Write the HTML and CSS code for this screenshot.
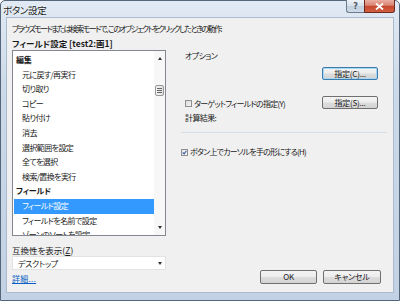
FILE: index.html
```html
<!DOCTYPE html>
<html lang="ja">
<head>
<meta charset="utf-8">
<title>ボタン設定</title>
<link rel="stylesheet" href="styles.css">
</head>
<body>
<div class="window">
  <div class="titlebar">
    <span class="title">ボタン設定</span>
    <div class="caption-btns">
      <span class="cbtn help">?</span>
      <span class="cbtn close"><svg width="9" height="7" viewBox="0 0 9 7"><path d="M1 0.5 L8 6.5 M8 0.5 L1 6.5" stroke="#fff" stroke-width="1.8"/></svg></span>
    </div>
  </div>
  <div class="client">
    <div class="intro">ブラウズモードまたは検索モードで、このオブジェクトをクリックしたときの動作:</div>
    <div class="heading">フィールド設定 [test2:画1]</div>
    <div class="main">
      <div class="left">
        <div class="listbox">
          <ul class="list">
            <li class="group">編集</li>
            <li>元に戻す/再実行</li>
            <li>切り取り</li>
            <li>コピー</li>
            <li>貼り付け</li>
            <li>消去</li>
            <li>選択範囲を設定</li>
            <li>全てを選択</li>
            <li>検索/置換を実行</li>
            <li class="group">フィールド</li>
            <li class="selected">フィールド設定</li>
            <li>フィールドを名前で設定</li>
            <li>ゾーンのソートを設定</li>
          </ul>
          <div class="scrollbar">
            <span class="arrow-up"></span>
            <span class="thumb"><i></i><i></i><i></i></span>
            <span class="arrow-down"></span>
          </div>
        </div>
        <div class="compat-label">互換性を表示(<u>Z</u>)</div>
        <div class="select"><span>デスクトップ</span><span class="arrow-down"></span></div>
        <a class="link" href="#">詳細...</a>
      </div>
      <div class="right">
        <div class="opt-label">オプション</div>
        <div class="btn-row"><span class="btn focused">指定(C)...</span></div>
        <div class="check-row">
          <span class="check-item"><span class="checkbox"></span>ターゲットフィールドの指定(Y)</span>
          <span class="btn">指定(S)...</span>
        </div>
        <div class="calc">計算結果:</div>
        <div class="separator"></div>
        <div class="check-row2"><span class="checkbox checked"><svg width="7" height="7" viewBox="0 0 7 7"><path d="M1 3.5 L3 5.5 L6.2 1" fill="none" stroke="#3a5a9a" stroke-width="1.5"/></svg></span>ボタン上でカーソルを手の形にする(H)</div>
        <div class="dialog-btns">
          <span class="btn ok">OK</span>
          <span class="btn cancel">キャンセル</span>
        </div>
      </div>
    </div>
  </div>
</div>
</body>
</html>
```
FILE: styles.css
```css
* { box-sizing: border-box; margin: 0; padding: 0; }
html, body { width: 400px; height: 301px; overflow: hidden; }
body {
  font-family: "Noto Sans CJK JP", "Noto Sans", sans-serif;
  font-size: 8px;
  letter-spacing: -0.6px;
  font-feature-settings: "palt";
  color: #1a1a1a;
  background: #fff;
}
.window {
  width: 400px;
  height: 301px;
  display: flex;
  flex-direction: column;
  padding-bottom: 7px;
  border: 1px solid #56667a;
  border-radius: 5px 5px 0 0;
  background: linear-gradient(#e1eaf4 0%, #cbd9e8 30%, #c2d2e4 100%);
}
.titlebar {
  height: 16px;
  display: flex;
  justify-content: space-between;
  align-items: flex-start;
  padding: 0 4px 0 2px;
}
.title {
  font-size: 9.5px;
  letter-spacing: -0.3px;
  line-height: 18px;
  color: #1b1b1b;
  text-shadow: 0 0 3px #fff;
}
.caption-btns { display: flex; margin-top: -1px; }
.cbtn {
  height: 13px;
  display: flex;
  align-items: center;
  justify-content: center;
  border: 1px solid #6c7b8e;
  border-top: none;
}
.help {
  width: 18px;
  border-right: none;
  border-radius: 0 0 0 3px;
  background: linear-gradient(#eef2f7 0%, #d6e0eb 50%, #c2cfdd 51%, #cfdbe7 100%);
  color: #4a5563;
  font-family: "DejaVu Sans", sans-serif;
  font-size: 8px;
  letter-spacing: 0;
  font-weight: bold;
}
.close {
  width: 31px;
  border-color: #6e2a20;
  border-radius: 0 0 3px 0;
  background: linear-gradient(#eab0a3 0%, #d98270 45%, #c7452e 50%, #d1603f 100%);
}
.client {
  flex: 1;
  margin: 0 5px;
  border: 1px solid #a9bbcf;
  background: #f0f0f0;
  padding: 5px 5px 7px 5px;
  display: flex;
  flex-direction: column;
}
.intro { line-height: 12px; white-space: nowrap; letter-spacing: -1.55px; }
.heading { line-height: 12px; margin-top: 2px; font-weight: bold; font-size: 8.5px; letter-spacing: 0; }
.main {
  flex: 1;
  margin-top: 1px;
  display: grid;
  grid-template-columns: 154px 1fr;
  column-gap: 15px;
}
.left { display: flex; flex-direction: column; }
.listbox {
  height: 186px;
  border: 1px solid #828790;
  background: #fff;
  display: flex;
  overflow: hidden;
}
.list {
  list-style: none;
  flex: 1;
  padding-top: 2px;
  overflow: hidden;
}
.list li {
  height: 14.6px;
  line-height: 14.6px;
  padding-left: 8px;
  margin-left: 1px;
  white-space: nowrap;
}
.list li.group { font-weight: bold; padding-left: 2px; letter-spacing: -0.2px; }
.list li.selected { background: #3399ff; color: #fff; }
.scrollbar {
  width: 11px;
  background: #f7f7f7;
  display: flex;
  flex-direction: column;
  align-items: center;
  padding-top: 6px;
}
.arrow-up {
  width: 0; height: 0;
  border-left: 2.5px solid transparent;
  border-right: 2.5px solid transparent;
  border-bottom: 3px solid #333;
}
.arrow-down {
  width: 0; height: 0;
  border-left: 2.5px solid transparent;
  border-right: 2.5px solid transparent;
  border-top: 3px solid #333;
}
.thumb {
  margin-top: 25px;
  width: 9px;
  height: 11px;
  border: 1px solid #979797;
  border-radius: 2px;
  background: linear-gradient(90deg, #f3f3f3, #e2e2e2);
  display: flex;
  flex-direction: column;
  align-items: center;
  justify-content: center;
  gap: 1px;
}
.thumb i { display: block; width: 5px; height: 1px; background: #666; }
.scrollbar .arrow-down { margin-top: auto; margin-bottom: 6px; }
.compat-label { margin-top: 8px; line-height: 12px; font-size: 8.5px; letter-spacing: 0; }
.compat-label u { text-decoration: underline; }
.select {
  height: 14px;
  border: 1px solid #e2e2e2;
  background: #fff;
  display: flex;
  align-items: center;
  justify-content: space-between;
  padding: 0 3px 0 5px;
  letter-spacing: -0.3px;
}
.link {
  margin-top: 3px;
  line-height: 12px;
  color: #0a5fc4;
  text-decoration: underline;
  align-self: flex-start;
  letter-spacing: 0.3px;
}
.right { display: flex; flex-direction: column; }
.opt-label { line-height: 12px; padding-left: 4px; }
.btn-row { display: flex; justify-content: flex-end; margin-top: 5px; padding-right: 10px; }
.btn {
  width: 56px;
  height: 13px;
  display: flex;
  align-items: center;
  justify-content: center;
  border: 1px solid #707070;
  border-radius: 2px;
  background: linear-gradient(#f4f4f4 0%, #ececec 48%, #dddddd 52%, #d3d3d3 100%);
  line-height: 1;
  letter-spacing: -0.2px;
}
.btn.focused {
  border-color: #3d7bad;
  box-shadow: inset 0 0 0 1px #a7d8f3;
}
.check-row {
  display: flex;
  justify-content: space-between;
  align-items: center;
  margin-top: 16px;
  padding: 0 10px 0 4px;
}
.check-item { display: flex; align-items: center; gap: 1px; margin-top: 2px; letter-spacing: -0.75px; }
.checkbox {
  width: 7px;
  height: 7px;
  margin-right: 1px;
  border: 1px solid #8f8f8f;
  background: linear-gradient(135deg, #dcdcdc, #f4f4f4);
  display: inline-flex;
  align-items: center;
  justify-content: center;
}
.calc { margin-top: 3px; line-height: 12px; padding-left: 4px; }
.separator {
  margin-top: 8px;
  height: 1px;
  background: #d5dfe5;
  margin-right: 1px;
}
.check-row2 {
  margin-top: 13px;
  line-height: 12px;
  display: flex;
  align-items: center;
  gap: 1px;
  letter-spacing: -0.8px;
}
.checkbox.checked { background: linear-gradient(135deg, #e4e9f0, #fafbfc); }
.checkbox.checked svg { display: block; }
.dialog-btns {
  margin-top: auto;
  margin-bottom: 1px;
  display: flex;
  justify-content: flex-end;
  gap: 6px;
  padding-right: 7px;
}
.btn.ok { width: 57px; height: 14px; }
.btn.cancel { width: 58px; height: 14px; }
```
